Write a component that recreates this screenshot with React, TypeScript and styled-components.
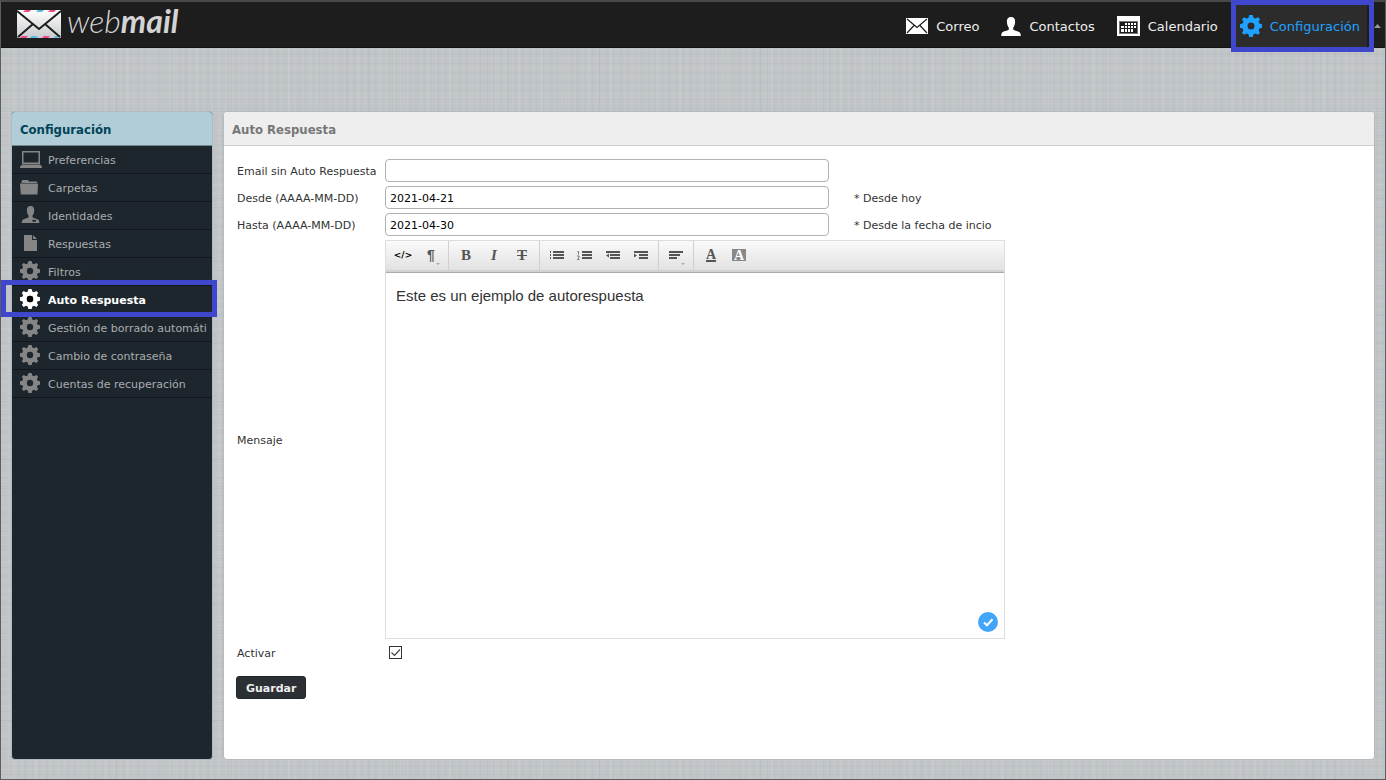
import React, { useState } from "react";
import styled, { createGlobalStyle, css } from "styled-components";

const GlobalStyle = createGlobalStyle`
  *, *::before, *::after { box-sizing: border-box; }
  body {
    margin: 0;
    font-family: "DejaVu Sans", Verdana, sans-serif;
    font-size: 11px;
    color: #333;
  }
`;

const highlight = "#3f48cc";

const Page = styled.div`
  display: flex;
  flex-direction: column;
  min-height: 100vh;
  border: 1px solid #5c5d5f;
  border-top: 2px solid #494949;
  background-color: #c1c5c8;
  background-image:
    repeating-linear-gradient(90deg, rgba(255, 255, 255, 0.06) 0 1px, transparent 1px 3px, rgba(90, 100, 110, 0.04) 3px 4px, transparent 4px 7px),
    repeating-linear-gradient(0deg, rgba(255, 255, 255, 0.06) 0 1px, transparent 1px 4px, rgba(90, 100, 110, 0.04) 4px 5px, transparent 5px 9px),
    repeating-linear-gradient(90deg, rgba(90, 100, 110, 0.04) 0 1px, transparent 1px 11px, rgba(255, 255, 255, 0.05) 11px 13px, transparent 13px 23px),
    repeating-linear-gradient(0deg, rgba(90, 100, 110, 0.04) 0 1px, transparent 1px 13px, rgba(255, 255, 255, 0.04) 13px 15px, transparent 15px 29px);
`;

const TopBar = styled.header`
  display: flex;
  align-items: stretch;
  justify-content: space-between;
  height: 46px;
  background: #1d1d1d;
  border-bottom: 1px solid #121212;
`;

const Brand = styled.a`
  display: flex;
  align-items: center;
  gap: 6px;
  padding: 0 0 2px 16px;
  color: #d4d4d4;
  text-decoration: none;
  font: italic 300 32px/38px Lato, sans-serif;

  span { padding-bottom: 6px; }
  b { font-weight: 700; }
`;

const Nav = styled.nav`
  display: flex;
`;

const NavLink = styled.a<{ $current?: boolean }>`
  position: relative;
  display: flex;
  align-items: center;
  gap: 8px;
  padding: 4px 11px 0 11px;
  font-size: 13px;
  line-height: 20px;
  text-decoration: none;
  color: #eee;

  svg { flex: none; margin-bottom: 1px; }

  ${(p) =>
    p.$current &&
    css`
      padding-right: 7px;
      background: linear-gradient(90deg, transparent 4px, #2c2c2c 4px);
      color: #1fa2ff;

      &::after {
        content: "";
        position: absolute;
        inset: -2px -7px -5px 2px;
        border: 5px solid ${highlight};
      }
    `}
`;

const Collapse = styled.button`
  display: flex;
  align-items: center;
  width: 18px;
  padding: 3px 0 0 7px;
  border: 0;
  background: none;
`;

const Main = styled.main`
  display: flex;
  flex: 1;
  gap: 10px;
  padding: 63px 10px 19px;
`;

const panel = css`
  border: 1px solid #b3babf;
  border-radius: 4px;
`;

const Sidebar = styled.aside`
  ${panel}
  flex: 0 0 202px;
  min-width: 0;
  background: #1e262d;
`;

const PanelTitle = styled.h2<{ $blue?: boolean }>`
  margin: 0;
  height: 34px;
  padding: 0 8px;
  border-radius: 3px 3px 0 0;
  border-bottom: 1px solid ${(p) => (p.$blue ? "#70878f" : "#cfcfcf")};
  background: ${(p) => (p.$blue ? "#b0cdd8" : "#eee")};
  color: ${(p) => (p.$blue ? "#004458" : "#777")};
  font: bold 13px/35px "DejaVu Sans Condensed", "DejaVu Sans", sans-serif;
  font-stretch: condensed;
`;

const Menu = styled.ul`
  margin: 0;
  padding: 0;
  list-style: none;
`;

const MenuItem = styled.li<{ $current?: boolean }>`
  position: relative;
  border-bottom: 1px solid #12181d;

  ${(p) =>
    p.$current &&
    css`
      z-index: 1;
      &::after {
        content: "";
        position: absolute;
        inset: -6px -5px -4px -11px;
        border: 5px solid ${highlight};
        pointer-events: none;
      }
    `}
`;

const MenuLink = styled.a<{ $current?: boolean }>`
  display: flex;
  align-items: center;
  gap: 6px;
  height: 27px;
  padding: 2px 0 0 8px;
  overflow: hidden;
  white-space: nowrap;
  text-decoration: none;
  color: ${(p) => (p.$current ? "#fff" : "#a9adb0")};
  font-weight: ${(p) => (p.$current ? "bold" : "normal")};

  svg { flex: none; color: ${(p) => (p.$current ? "#fff" : "#858585")}; margin-bottom: 4px; }
`;

const Content = styled.section`
  ${panel}
  flex: 1;
  min-width: 0;
  background: #fff;
`;

const Form = styled.form`
  padding: 13px 12px 59px;
`;

const Fields = styled.div`
  display: grid;
  grid-template-columns: 149px minmax(0, 444px) minmax(0, 176px);
  row-gap: 4px;
  align-items: center;
`;

const Label = styled.label`
  grid-column: 1;
  padding: 2px 0 0 1px;
  white-space: nowrap;
`;

const TextBox = styled.input`
  grid-column: 2;
  width: 100%;
  height: 23px;
  padding: 2px 4px 0;
  border: 1px solid #b2b2b2;
  border-radius: 4px;
  background: #fff;
  color: #000;
  font: 11px "DejaVu Sans", Verdana, sans-serif;
`;

const Note = styled.span`
  padding: 2px 0 0 25px;
`;

const Editor = styled.div`
  position: relative;
  grid-column: 2 / 4;
  border: 1px solid #ddd;
`;

const Toolbar = styled.div`
  display: flex;
  height: 32px;
  border-bottom: 1px solid #aaa;
  box-shadow: inset 0 -2px #d2d2d2;
  background: linear-gradient(#fafafa, #e0e0e0);
`;

const ToolGroup = styled.div`
  display: flex;
  height: 29px;
  padding: 0 3px;
  border-right: 1px solid #d0d0d0;

  &:last-child { border-right: 0; }
`;

const Tool = styled.button<{ $menu?: boolean }>`
  position: relative;
  display: flex;
  align-items: center;
  justify-content: center;
  width: 28px;
  height: 28px;
  padding: 0;
  border: 0;
  background: none;
  color: #555;

  ${(p) =>
    p.$menu &&
    css`
      &::after {
        content: "";
        position: absolute;
        right: 5px;
        bottom: 4px;
        border: 2px solid transparent;
        border-top-color: #aaa;
        border-bottom: 0;
      }
    `}
`;

const Glyph = styled.span<{ $italic?: boolean; $strike?: boolean }>`
  font: ${(p) => (p.$italic ? "italic" : "normal")} bold 15px/16px "Liberation Serif", serif;
  text-decoration: ${(p) => (p.$strike ? "line-through" : "none")};
`;

const CodeGlyph = styled.span`
  color: #000;
  font: bold 9px/14px "DejaVu Sans", sans-serif;
`;

const ParagraphGlyph = styled.span`
  font: bold 14px/16px "Liberation Sans", sans-serif;
`;

const ColorGlyph = styled.span<{ $filled?: boolean }>`
  width: ${(p) => (p.$filled ? "14px" : "10px")};
  height: 12px;
  font: bold 14px/13px "Liberation Serif", serif;
  text-align: center;
  ${(p) =>
    p.$filled
      ? css`
          background: #888;
          color: #fff;
        `
      : css`
          height: 13px;
          line-height: 11px;
          border-bottom: 2px solid #555;
        `}
`;

const MessageBox = styled.textarea`
  display: block;
  width: 100%;
  height: 365px;
  padding: 13px 10px;
  border: 0;
  outline: 0;
  resize: none;
  color: #333;
  font: 15px/20px "Liberation Sans", Arial, sans-serif;
`;

const Status = styled.svg`
  position: absolute;
  right: 6px;
  bottom: 6px;
`;

const CheckCell = styled.div`
  display: grid;
  grid-column: 2;
  height: 19px;
  padding-left: 4px;
  align-items: center;
  justify-items: start;

  svg, input { grid-area: 1 / 1; }
  svg { pointer-events: none; }
`;

const CheckBox = styled.input`
  appearance: none;
  width: 13px;
  height: 13px;
  margin: 0;
  border: 1px solid #333;
  background: #fff;
`;

const SaveButton = styled.button`
  margin-top: 14px;
  height: 23px;
  padding: 2px 9px 0;
  border: 1px solid #1e262d;
  border-radius: 3px;
  background: #2c3035;
  color: #eee;
  font: bold 11px "DejaVu Sans", Verdana, sans-serif;
`;

const LogoMark = () => (
  <svg width="44" height="28" viewBox="0 0 44 28" aria-hidden="true">
    <defs>
      <linearGradient id="paper" x1="0" y1="0" x2="0" y2="1">
        <stop offset="0" stopColor="#fff" />
        <stop offset="1" stopColor="#c8cacc" />
      </linearGradient>
    </defs>
    <rect width="44" height="28" rx="1" fill="url(#paper)" />
    <path d="M8 0h6l-2 2H6zM33 0h6l-2 2h-6zM5 26h6l-2 2H3zM27 26h6l-2 2h-6z" fill="#f0468c" />
    <path d="M21 0h6l-2 2h-6zM15 26h6l-2 2h-6zM38 26h4l-2 2h-3z" fill="#5bbbe0" />
    <path d="M0 1 22 19 44 1M1 27 16 14M43 27 28 14" fill="none" stroke="#1d1d1d" strokeWidth="2" />
  </svg>
);

const MailIcon = () => (
  <svg width="22" height="16" viewBox="0 0 22 16" aria-hidden="true">
    <rect width="22" height="16" fill="#fff" />
    <path d="M1 1 11 9.500 21 1M1 15 8 7.500M21 15 14 7.500" fill="none" stroke="#1d1d1d" strokeWidth="1.200" />
  </svg>
);

const personPath =
  "M10 0c3 0 4.300 2 4.100 5-.1 2.800-1.200 4.800-1.900 5.700v1.800c.6 1.200 6 1.600 7 3.500.5 1 .6 2 .6 3H.2c0-1 .1-2 .6-3 1-1.900 6.400-2.300 7-3.500v-1.800C7.100 9.800 6 7.800 5.900 5 5.700 2 7 0 10 0z";

const PersonIcon = () => (
  <svg width="20" height="19" viewBox="0 0 20 19" aria-hidden="true">
    <path d={personPath} fill="#fff" />
  </svg>
);

const CalendarIcon = () => (
  <svg width="23" height="20" viewBox="0 0 23 20" aria-hidden="true">
    <rect width="23" height="20" fill="#fff" />
    <rect x="2.500" y="5.500" width="18" height="12" fill="#1d1d1d" stroke="#777" />
    <path
      d="M8 7h2v2H8zM11 7h2v2h-2zM14 7h2v2h-2zM17 7h2v2h-2zM4 10h3v2H4zM8 10h2v2H8zM11 10h2v2h-2zM14 10h2v2h-2zM17 10h2v2h-2zM4 13h3v3H4zM8 13h2v3H8zM11 13h2v3h-2zM14 13h2v3h-2z"
      fill="#fff"
    />
  </svg>
);

const GearIcon = ({ size, hole = "none" }: { size: number; hole?: string }) => (
  <svg width={size} height={size} viewBox="0 0 22 22" fill="currentColor" aria-hidden="true">
    <path
      fillRule="evenodd"
      d="M9.200 0h3.600l.7 2.700 2 .8L18 2.200 20 4.300l-1.400 2.300.8 1.900 2.600.7v3.600l-2.600.7-.8 1.900L20 17.700 18 19.800l-2.500-1.300-2 .8-.7 2.700H9.200l-.7-2.700-2-.8L4 19.800 2 17.700l1.400-2.300-.8-1.900L0 12.800V9.200l2.600-.7.8-1.900L2 4.300 4 2.200l2.500 1.300 2-.8zM11 7.500a3.500 3.500 0 1 0 0 7 3.500 3.500 0 0 0 0-7z"
    />
    <circle cx="11" cy="11" r="3.500" fill={hole} />
  </svg>
);

const LaptopIcon = () => (
  <svg width="22" height="18" viewBox="0 0 22 18" aria-hidden="true">
    <path fillRule="evenodd" d="M2 1h18v13H2zM3.500 2.500v10h15v-10z" fill="currentColor" />
    <path d="M2 14.500h18l2 2V18H0v-1.500z" fill="currentColor" />
  </svg>
);

const FolderIcon = () => (
  <svg width="22" height="16" viewBox="0 0 22 16" fill="currentColor" aria-hidden="true">
    <path d="M2 1h6l1 1.500h8V4H1.500zM0 4.500h18l-.5 11H.8z" />
  </svg>
);

const IdentityIcon = () => (
  <svg width="22" height="17" viewBox="-1 0 23 19" aria-hidden="true">
    <path d={personPath} fill="currentColor" />
    <rect x="12" y="15.500" width="4" height="2" fill="#1e262d" />
  </svg>
);

const DocIcon = () => (
  <svg width="22" height="16" viewBox="0 0 22 16" fill="currentColor" aria-hidden="true">
    <path d="M4 0h8v5h5v11H4zM13 0l4 4h-4z" />
  </svg>
);

const Lines = ({ d, children }: { d: string; children?: React.ReactNode }) => (
  <svg width="16" height="12" viewBox="0 0 16 12" fill="currentColor" aria-hidden="true">
    <path d={d} />
    {children}
  </svg>
);

const menu = [
  { text: "Preferencias", icon: <LaptopIcon /> },
  { text: "Carpetas", icon: <FolderIcon /> },
  { text: "Identidades", icon: <IdentityIcon /> },
  { text: "Respuestas", icon: <DocIcon /> },
  { text: "Filtros", icon: <GearIcon size={20} /> },
  { text: "Auto Respuesta", icon: <GearIcon size={20} hole="#000" />, current: true },
  { text: "Gestión de borrado automáti", icon: <GearIcon size={20} /> },
  { text: "Cambio de contraseña", icon: <GearIcon size={20} /> },
  { text: "Cuentas de recuperación", icon: <GearIcon size={20} /> },
];

const IconSlot = styled.span`
  display: flex;
  flex: 0 0 22px;
  justify-content: flex-start;
`;

export default function App() {
  const [active, setActive] = useState(true);

  return (
    <>
      <GlobalStyle />
      <Page>
        <TopBar>
          <Brand href="#">
            <LogoMark />
            <span>web<b>mail</b></span>
          </Brand>
          <Nav>
            <NavLink href="#correo"><MailIcon />Correo</NavLink>
            <NavLink href="#contactos"><PersonIcon />Contactos</NavLink>
            <NavLink href="#calendario"><CalendarIcon />Calendario</NavLink>
            <NavLink href="#configuracion" $current><GearIcon size={22} />Configuración</NavLink>
            <Collapse type="button" aria-label="Contraer barra">
              <svg width="7" height="4" viewBox="0 0 7 4" aria-hidden="true">
                <path d="M0 4 3.500 0 7 4z" fill="#999" />
              </svg>
            </Collapse>
          </Nav>
        </TopBar>
        <Main>
          <Sidebar>
            <PanelTitle $blue>Configuración</PanelTitle>
            <Menu>
              {menu.map((m) => (
                <MenuItem key={m.text} $current={m.current}>
                  <MenuLink href="#" $current={m.current}>
                    <IconSlot>{m.icon}</IconSlot>
                    {m.text}
                  </MenuLink>
                </MenuItem>
              ))}
            </Menu>
          </Sidebar>
          <Content>
            <PanelTitle>Auto Respuesta</PanelTitle>
            <Form onSubmit={(e) => e.preventDefault()}>
              <Fields>
                <Label htmlFor="email">Email sin Auto Respuesta</Label>
                <TextBox id="email" type="text" />
                <Label htmlFor="desde">Desde (AAAA-MM-DD)</Label>
                <TextBox id="desde" type="text" defaultValue="2021-04-21" />
                <Note>* Desde hoy</Note>
                <Label htmlFor="hasta">Hasta (AAAA-MM-DD)</Label>
                <TextBox id="hasta" type="text" defaultValue="2021-04-30" />
                <Note>* Desde la fecha de incio</Note>
                <Label htmlFor="mensaje">Mensaje</Label>
                <Editor>
                  <Toolbar>
                    <ToolGroup>
                      <Tool type="button" aria-label="HTML"><CodeGlyph>&lt;/&gt;</CodeGlyph></Tool>
                      <Tool type="button" aria-label="Formato" $menu><ParagraphGlyph>¶</ParagraphGlyph></Tool>
                    </ToolGroup>
                    <ToolGroup>
                      <Tool type="button" aria-label="Negrita"><Glyph>B</Glyph></Tool>
                      <Tool type="button" aria-label="Cursiva"><Glyph $italic>I</Glyph></Tool>
                      <Tool type="button" aria-label="Tachado"><Glyph $strike>T</Glyph></Tool>
                    </ToolGroup>
                    <ToolGroup>
                      <Tool type="button" aria-label="Lista">
                        <Lines d="M1 2h1v2H1zM1 5h1v2H1zM1 8h1v2H1zM4 2h11v2H4zM4 5h11v2H4zM4 8h11v2H4z" />
                      </Tool>
                      <Tool type="button" aria-label="Lista numerada">
                        <Lines d="M5 2h10v2H5zM5 5h10v2H5zM5 8h10v2H5z">
                          <path d="M0.500 2.500h1v3M0 7h2v1.500L0.500 10.500h2" fill="none" stroke="currentColor" strokeWidth="0.800" />
                        </Lines>
                      </Tool>
                      <Tool type="button" aria-label="Reducir sangría">
                        <Lines d="M1 2h14v2H1zM5 5h10v2H5zM5 8h10v2H5zM4 4.500v4L1 6.500z" />
                      </Tool>
                      <Tool type="button" aria-label="Aumentar sangría">
                        <Lines d="M1 2h14v2H1zM6 5h9v2H6zM6 8h9v2H6zM1 4.500v4l3-2z" />
                      </Tool>
                    </ToolGroup>
                    <ToolGroup>
                      <Tool type="button" aria-label="Alinear" $menu>
                        <Lines d="M1 2h14v2H1zM1 5h11v2H1zM1 8h8v2H1z" />
                      </Tool>
                    </ToolGroup>
                    <ToolGroup>
                      <Tool type="button" aria-label="Color de texto"><ColorGlyph>A</ColorGlyph></Tool>
                      <Tool type="button" aria-label="Color de fondo"><ColorGlyph $filled>A</ColorGlyph></Tool>
                    </ToolGroup>
                  </Toolbar>
                  <MessageBox id="mensaje" spellCheck={false} defaultValue="Este es un ejemplo de autorespuesta" />
                  <Status width="20" height="20" viewBox="0 0 20 20" aria-hidden="true">
                    <circle cx="10" cy="10" r="10" fill="#42a5fa" />
                    <path d="m6 10.500 3 2.800 5.500-6" fill="none" stroke="#fff" strokeWidth="2" />
                  </Status>
                </Editor>
                <Label htmlFor="activar">Activar</Label>
                <CheckCell>
                  <CheckBox id="activar" type="checkbox" checked={active} onChange={(e) => setActive(e.target.checked)} />
                  {active && (
                    <svg width="13" height="13" viewBox="0 0 13 13" aria-hidden="true">
                      <path d="m2.500 6.500 3 3 5.500-6" fill="none" stroke="#444" strokeWidth="1.200" />
                    </svg>
                  )}
                </CheckCell>
              </Fields>
              <SaveButton type="submit">Guardar</SaveButton>
            </Form>
          </Content>
        </Main>
      </Page>
    </>
  );
}
